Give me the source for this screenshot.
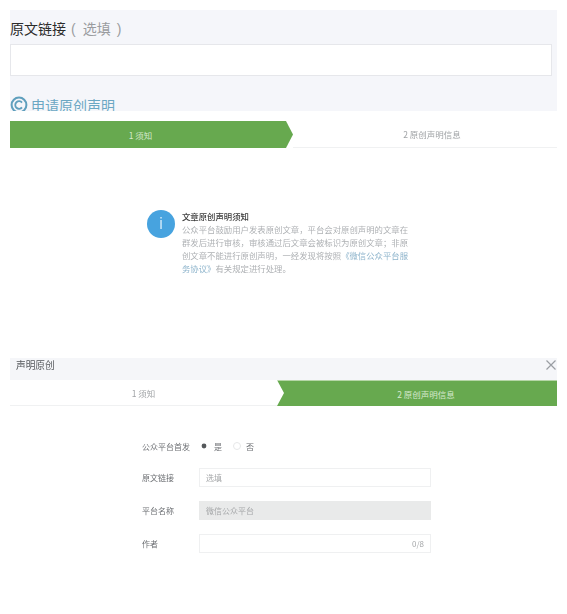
<script lang="ts">
	const steps = ['1 须知', '2 原创声明信息'];
</script>

<div class="page">
	<section class="link-panel">
		<div class="link-title">原文链接<span class="optional"><span class="paren">(</span>选填<span class="paren paren--end">)</span></span></div>
		<div class="link-input"></div>
		<div class="apply">
			<svg class="apply-icon" width="18" height="18" viewBox="0 0 18 18" aria-hidden="true">
				<circle cx="9" cy="9" r="7.4" fill="none" stroke="#5f9fbd" stroke-width="2" />
				<path d="M12 6.6a3.8 3.8 0 1 0 0 4.8" fill="none" stroke="#5f9fbd" stroke-width="1.8" />
			</svg>
			<span>申请原创声明</span>
		</div>
	</section>

	<section class="first-step">
		<div class="steps">
			<div class="step step--active step--left">{steps[0]}</div>
			<div class="step step--next">{steps[1]}</div>
		</div>
		<div class="notice">
			<div class="notice-icon">i</div>
			<div class="notice-body">
				<div class="notice-title">文章原创声明须知</div>
				<p>公众平台鼓励用户发表原创文章，平台会对原创声明的文章在群发后进行审核，审核通过后文章会被标识为原创文章；非原创文章不能进行原创声明，一经发现将按照<span class="notice-link">《微信公众平台服务协议》</span>有关规定进行处理。</p>
			</div>
		</div>
	</section>

	<section class="second-step">
		<header class="dialog-head">
			<span>声明原创</span>
			<svg width="12" height="12" viewBox="0 0 12 12" aria-hidden="true">
				<path d="M1.500 1.500l9 9M10.500 1.500l-9 9" stroke="#9a9ea3" stroke-width="1.2" fill="none" />
			</svg>
		</header>
		<div class="steps steps--second">
			<div class="step">{steps[0]}</div>
			<div class="step step--active step--right">{steps[1]}</div>
		</div>
		<form class="form">
			<div class="row row--radio">
				<span class="label">公众平台首发</span>
				<span class="radio radio--on"></span><span class="radio-text">是</span>
				<span class="radio radio--off"></span><span class="radio-text">否</span>
			</div>
			<div class="row">
				<span class="label">原文链接</span>
				<div class="field"><span class="placeholder">选填</span></div>
			</div>
			<div class="row">
				<span class="label">平台名称</span>
				<div class="field field--disabled"><span class="placeholder">微信公众平台</span></div>
			</div>
			<div class="row">
				<span class="label">作者</span>
				<div class="field field--count"><span class="count">0/8</span></div>
			</div>
		</form>
	</section>
</div>

<style>
	:global(body) {
		margin: 0;
		background: #fff;
	}

	.page {
		width: 567px;
		height: 614px;
		overflow: hidden;
		padding-top: 10px;
		box-sizing: border-box;
		font-family: "Noto Sans CJK SC", "Liberation Sans", sans-serif;
		filter: blur(0.35px);
	}

	/* Top panel */
	.link-panel {
		margin: 0 10px;
		height: 101px;
		overflow: hidden;
		background: #f5f6fa;
	}
	.link-title {
		margin-top: 8px;
		height: 26px;
		line-height: 20px;
		font-size: 14px;
		color: #2b2b2b;
	}
	.optional {
		color: #9a9c9f;
	}
	.paren {
		margin: 0 7px 0 5px;
		font-family: "Liberation Sans", sans-serif;
		font-weight: 300;
	}
	.paren--end {
		margin: 0 0 0 6px;
	}
	.link-input {
		box-sizing: border-box;
		width: 542px;
		height: 32px;
		background: #fff;
		border: 1px solid #e6e7eb;
	}
	.apply {
		display: flex;
		align-items: center;
		gap: 3px;
		margin-top: 19px;
		height: 20px;
		font-size: 14px;
		line-height: 20px;
		color: #6ba7c3;
	}

	/* Steps */
	.steps {
		display: flex;
		height: 27px;
		font-size: 8.500px;
		color: #a0a3a6;
	}
	.step {
		flex: 1;
		display: flex;
		align-items: center;
		justify-content: center;
		border-bottom: 1px solid #f0f1f2;
	}
	.step--active {
		border-bottom: none;
		background: #67a94f;
		color: #d5e8cd;
	}
	.step--left {
		flex: none;
		width: 283px;
		padding-right: 22px;
		box-sizing: border-box;
		clip-path: polygon(0 0, 276px 0, 100% 50%, 276px 100%, 0 100%);
	}
	.step--next {
		padding-left: 14px;
	}
	.step--right {
		flex: none;
		width: 280px;
		padding-left: 18px;
		box-sizing: border-box;
		clip-path: polygon(0 0, 100% 0, 100% 100%, 0 100%, 7px 50%);
	}

	.first-step {
		margin: 10px 10px 0;
		height: 237px;
	}
	.notice {
		display: flex;
		gap: 7px;
		margin: 62px 0 0 137px;
		width: 263px;
	}
	.notice-icon {
		flex: none;
		width: 28px;
		height: 28px;
		border-radius: 50%;
		background: #47a3df;
		color: #cfe8f8;
		font: 16px/28px "Liberation Sans", sans-serif;
		text-align: center;
	}
	.notice-body {
		width: 228px;
		font-size: 8.400px;
		line-height: 13px;
		color: #aeb1b4;
	}
	.notice-title {
		color: #3c3c3c;
		font-weight: 500;
	}
	.notice-body p {
		margin: 0;
	}
	.notice-link {
		color: #8fb5cc;
	}

	/* Dialog */
	.second-step {
		margin: 0 10px;
	}
	.dialog-head {
		display: flex;
		align-items: center;
		justify-content: space-between;
		box-sizing: border-box;
		height: 22px;
		padding: 0 0 8px 6px;
		background: #f5f6f9;
		font-size: 9.700px;
		color: #55585c;
	}
	.steps--second {
		height: 26px;
	}
	.steps--second .step--active {
		border-top: 1px solid #b5d6a6;
	}

	/* Form */
	.form {
		display: flex;
		flex-direction: column;
		margin: 30px 0 0 132px;
		width: 289px;
		font-size: 8px;
		color: #6b6e72;
	}
	.row {
		display: flex;
		align-items: center;
		height: 20px;
		margin-bottom: 13px;
	}
	.row--radio {
		margin-bottom: 11px;
	}
	.label {
		flex: none;
		width: 57px;
	}
	.radio {
		flex: none;
		box-sizing: border-box;
		width: 6px;
		height: 6px;
		border-radius: 50%;
		margin-right: 7px;
	}
	.radio--on {
		margin-left: 2px;
		background: #55585b;
		transform: scale(0.8);
	}
	.radio--off {
		border: 1px solid #e6e7e8;
		width: 8px;
		height: 8px;
		margin-right: 5px;
	}
	.radio-text {
		width: 19px;
		font-size: 8px;
	}
	.field {
		flex: 1;
		box-sizing: border-box;
		height: 19px;
		display: flex;
		align-items: center;
		padding: 0 6px;
		border: 1px solid #eff0f1;
	}
	.field--disabled {
		background: #e9eaea;
		border-color: #e9eaea;
	}
	.field--count {
		justify-content: flex-end;
		padding-right: 6px;
	}
	.placeholder,
	.count {
		color: #a5a7a9;
	}
</style>
